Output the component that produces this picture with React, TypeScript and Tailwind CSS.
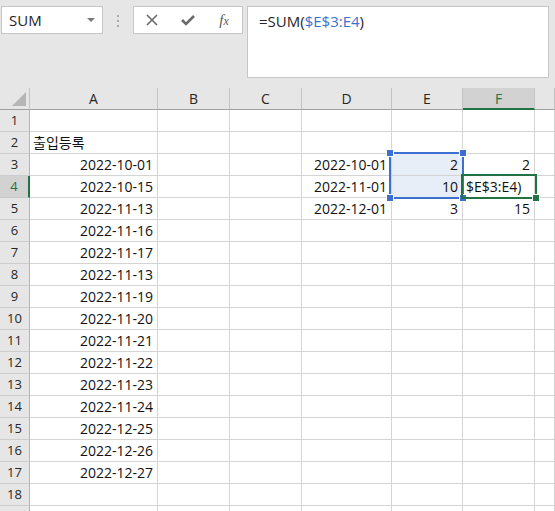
import React from "react";

const COLS = ["A", "B", "C", "D", "E", "F", ""];

const DATES_A = [
  "",
  "출입등록",
  "2022-10-01",
  "2022-10-15",
  "2022-11-13",
  "2022-11-16",
  "2022-11-17",
  "2022-11-13",
  "2022-11-19",
  "2022-11-20",
  "2022-11-21",
  "2022-11-22",
  "2022-11-23",
  "2022-11-24",
  "2022-12-25",
  "2022-12-26",
  "2022-12-27",
  "",
  "",
];

type CellData = { text: string; left?: boolean };

function cellFor(row: number, col: number): CellData {
  if (col === 0) {
    const t = DATES_A[row - 1] ?? "";
    return { text: t, left: row === 2 };
  }
  if (col === 3) {
    if (row === 3) return { text: "2022-10-01" };
    if (row === 4) return { text: "2022-11-01" };
    if (row === 5) return { text: "2022-12-01" };
  }
  if (col === 4) {
    if (row === 3) return { text: "2" };
    if (row === 4) return { text: "10" };
    if (row === 5) return { text: "3" };
  }
  if (col === 5) {
    if (row === 3) return { text: "2" };
    if (row === 4) return { text: "$E$3:E4)", left: true };
    if (row === 5) return { text: "15" };
  }
  return { text: "" };
}

function CancelIcon() {
  return (
    <svg width="12" height="12" viewBox="0 0 12 12">
      <path d="M1 1 L11 11 M11 1 L1 11" stroke="#6a6a6a" strokeWidth="1.6" fill="none" />
    </svg>
  );
}

function CheckIcon() {
  return (
    <svg width="14" height="12" viewBox="0 0 14 12">
      <path d="M1 6 L5 10 L13 2" stroke="#6a6a6a" strokeWidth="2.6" fill="none" />
    </svg>
  );
}

export default function App() {
  const rows = Array.from({ length: 19 }, (_, i) => i + 1);

  return (
    <div
      className="w-[555px] h-[511px] overflow-hidden bg-white flex flex-col"
      style={{ fontFamily: '"Open Sans", "Noto Sans CJK KR", sans-serif' }}
    >
      {/* formula bar */}
      <div className="h-[88px] shrink-0 bg-[#e6e6e6] flex items-start pt-[6px] pl-[1px]">
        <div className="w-[102px] h-[28px] bg-white border border-[#c6c6c6] flex items-center justify-between pl-[7px] pr-[7px]">
          <span className="text-[15px] text-[#262626] leading-none">SUM</span>
          <span className="w-0 h-0 border-l-[4px] border-r-[4px] border-t-[4px] border-l-transparent border-r-transparent border-t-[#7a7a7a]" />
        </div>
        <div className="w-[30px] flex flex-col items-center gap-[3px] pt-[9px]">
          <span className="w-[2px] h-[2px] bg-[#a8a8a8]" />
          <span className="w-[2px] h-[2px] bg-[#a8a8a8]" />
          <span className="w-[2px] h-[2px] bg-[#a8a8a8]" />
        </div>
        <div className="w-[110px] h-[28px] bg-white border border-[#c6c6c6] grid grid-cols-3 items-center justify-items-center">
          <CancelIcon />
          <CheckIcon />
          <span
            className="text-[15px] italic text-[#5a5a5a] leading-none"
            style={{ fontFamily: '"Liberation Serif", serif' }}
          >
            f<span className="text-[12px]">x</span>
          </span>
        </div>
        <div className="ml-[4px] w-[302px] h-[72px] bg-white border border-[#c6c6c6] pl-[11px] pt-[3px] text-[15px] text-[#262626]">
          =SUM(<span className="text-[#3d72cc]">$E$3:E4</span>)
        </div>
      </div>

      {/* sheet */}
      <div className="relative grid grid-cols-[30px_128px_72px_72px_90px_71px_72px_1fr] auto-rows-[22px] text-[14px] text-[#111]">
        {/* column headers */}
        <div className="bg-[#e6e6e6] border-r border-b border-r-[#c4c4c4] border-b-[#a0a0a0] flex items-end justify-end pr-[3px] pb-[3px]">
          <svg width="14" height="14" viewBox="0 0 14 14">
            <path d="M14 0 L14 14 L0 14 Z" fill="#b6b6b6" />
          </svg>
        </div>
        {COLS.map((c, i) =>
          c === "F" ? (
            <div
              key={i}
              className="bg-[#d2d2d2] border-r border-r-[#c4c4c4] border-b-2 border-b-[#217346] flex items-center justify-center text-[#217346]"
            >
              {c}
            </div>
          ) : (
            <div
              key={i}
              className="bg-[#e6e6e6] border-r border-b border-r-[#c4c4c4] border-b-[#a0a0a0] flex items-center justify-center text-[#262626]"
            >
              {c}
            </div>
          )
        )}

        {rows.map((r) => (
          <React.Fragment key={r}>
            {r === 4 ? (
              <div className="bg-[#d2d2d2] border-b border-b-[#c8c8c8] border-r-2 border-r-[#217346] flex items-center justify-center text-[13px] text-[#217346]">
                {r}
              </div>
            ) : (
              <div className="bg-[#e6e6e6] border-b border-r border-b-[#cdcdcd] border-r-[#b4b4b4] flex items-center justify-center text-[13px] text-[#262626]">
                {r < 19 ? r : ""}
              </div>
            )}
            {COLS.map((_, ci) => {
              const cell = cellFor(r, ci);
              const sel = ci === 4 && (r === 3 || r === 4);
              return (
                <div
                  key={ci}
                  className={`border-r border-b border-[#d4d4d4] flex items-center whitespace-nowrap ${
                    cell.left ? "justify-start pl-[3px]" : "justify-end pr-[4px]"
                  } ${sel ? "bg-[#e8eef8]" : "bg-white"}`}
                >
                  {cell.text}
                </div>
              );
            })}
          </React.Fragment>
        ))}

        {/* selected range E3:E4 */}
        <div className="absolute left-[389px] top-[64px] w-[75px] h-[47px] border-2 border-[#3c6fd0] pointer-events-none" />
        <div className="absolute left-[387px] top-[62px] w-[6px] h-[6px] bg-[#3c6fd0] outline outline-1 outline-white" />
        <div className="absolute left-[460px] top-[62px] w-[6px] h-[6px] bg-[#3c6fd0] outline outline-1 outline-white" />
        <div className="absolute left-[387px] top-[107px] w-[6px] h-[6px] bg-[#3c6fd0] outline outline-1 outline-white" />
        <div className="absolute left-[460px] top-[107px] w-[6px] h-[6px] bg-[#3c6fd0] outline outline-1 outline-white" />

        {/* active cell F4 */}
        <div className="absolute left-[461px] top-[86px] w-[76px] h-[25px] border-2 border-[#217346] pointer-events-none" />
        <div className="absolute left-[533px] top-[107px] w-[6px] h-[6px] bg-[#217346] outline outline-1 outline-white" />
      </div>
    </div>
  );
}
